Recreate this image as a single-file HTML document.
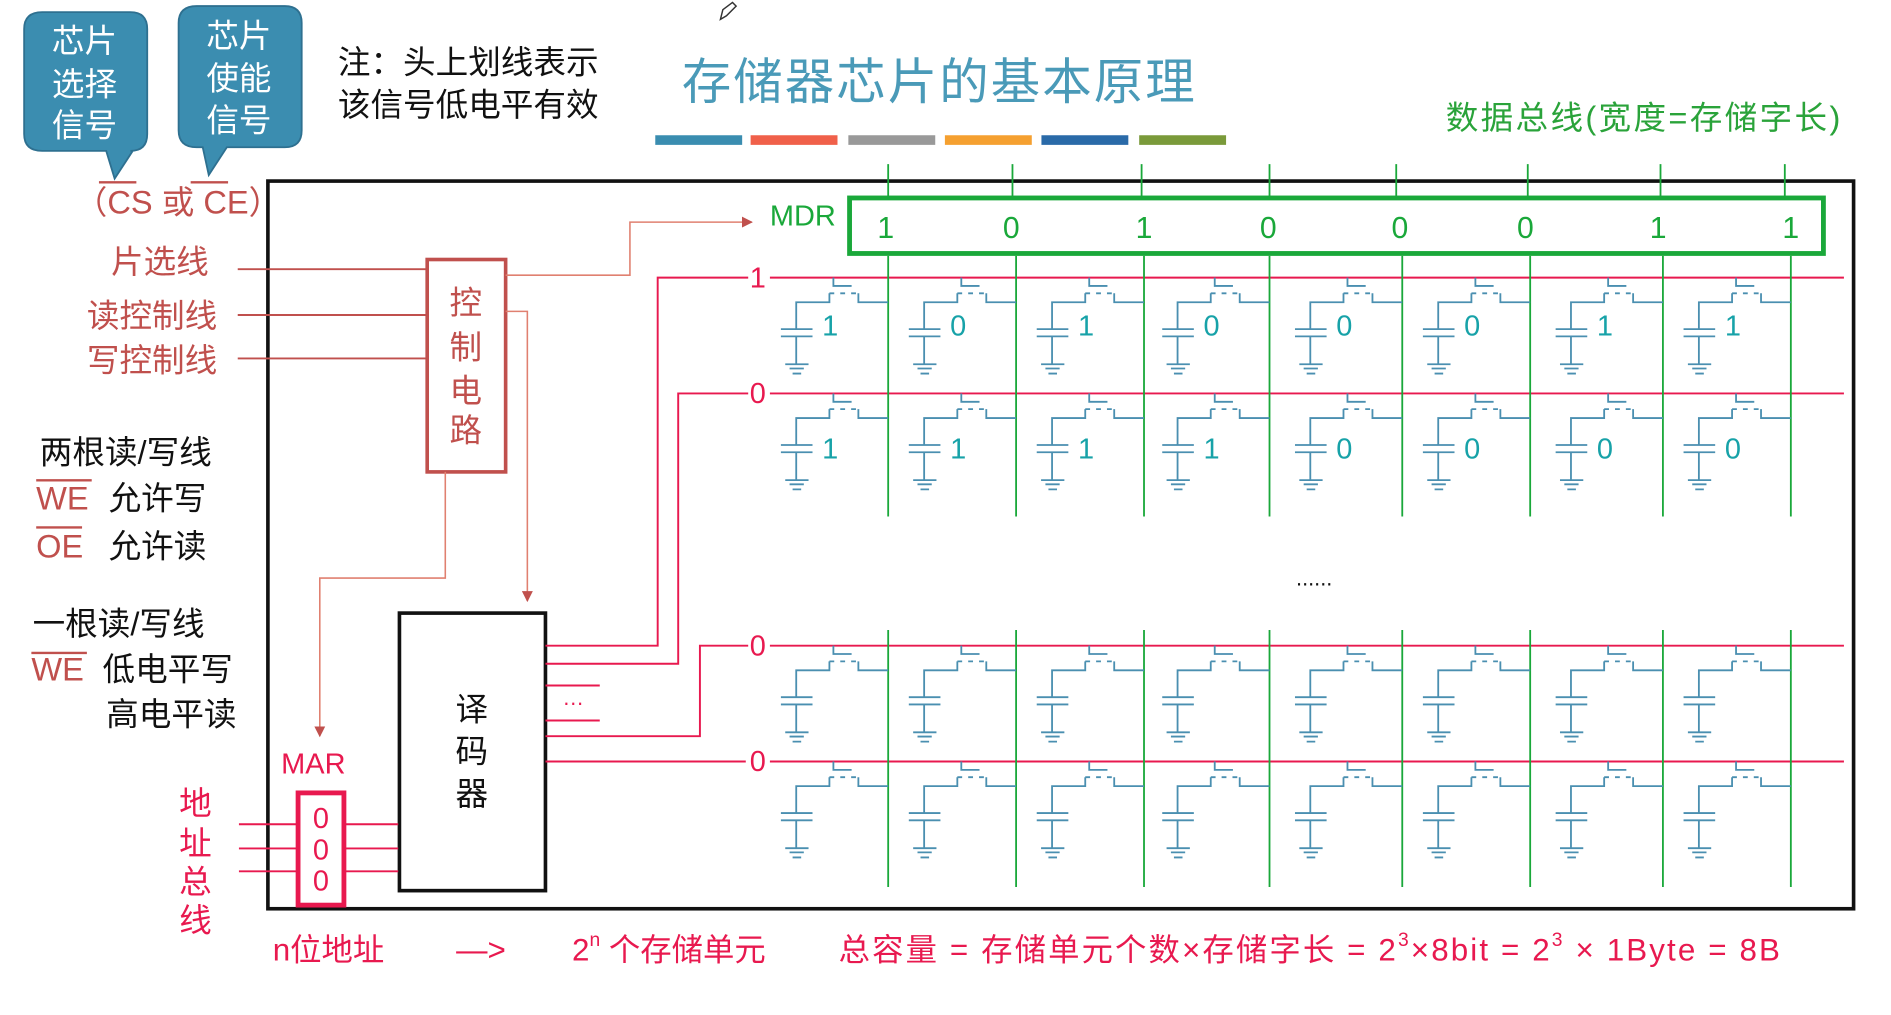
<!DOCTYPE html>
<html><head><meta charset="utf-8"><style>
html,body{margin:0;padding:0;background:#fff;width:1891px;height:1015px;overflow:hidden}
svg{display:block}
text{font-family:"Liberation Sans","Noto Sans CJK SC",sans-serif}
</style></head><body>
<svg width="1891" height="1015" viewBox="0 0 1567 841" xmlns="http://www.w3.org/2000/svg">
<defs>
<g id="c" fill="none" stroke="#4a8fb0" stroke-width="1.5">
<path d="M-45.4,0V6.9H-30.3M-76.2,42.7V20.4H-48.7V13M-24.7,13V20.4H0M-88.9,42.7H-62.7M-88.9,48.7H-62.7M-76.2,48.7V71.8M-85.3,71.8H-66M-81.7,75.3H-69.9M-79.2,79.5H-72.1"/>
<path d="M-48.7,13H-24.7" stroke-dasharray="4 5"/>
</g>
<marker id="ar" viewBox="0 0 10 10" refX="9" refY="5" markerWidth="7" markerHeight="7" orient="auto"><path d="M0,0L10,5L0,10z" fill="#c0504d"/></marker>
</defs>

<path d="M35,10H108Q122,10 122,24V111Q122,125 108,125H110L95,148L88,125H35Q20,125 20,111V24Q20,10 35,10Z" fill="#3b8db0" stroke="#2e7090" stroke-width="1.5"/>
<path d="M163,5H236Q250,5 250,19V108Q250,122 236,122H188L173,145L168,122H163Q148,122 148,108V19Q148,5 163,5Z" fill="#3b8db0" stroke="#2e7090" stroke-width="1.5"/>
<g fill="#fff" font-size="27" text-anchor="middle">
<text x="70" y="43">芯片</text><text x="70" y="79">选择</text><text x="70" y="113">信号</text>
<text x="198" y="39">芯片</text><text x="198" y="74">使能</text><text x="198" y="109">信号</text>
</g>
<text x="62" y="177" font-size="27" fill="#c0504d">（CS 或 CE）</text>
<path d="M82,151H113M158,151H189" stroke="#c0504d" stroke-width="2"/>
<text x="280" y="61" font-size="27" fill="#111">注：头上划线表示</text>
<text x="280" y="96" font-size="27" fill="#111">该信号低电平有效</text>
<text x="565" y="82" font-size="41" fill="#4a9ab8" textLength="425">存储器芯片的基本原理</text>
<path d="M599,8l8,-6l3,3l-8,8l-5,3z" fill="none" stroke="#333" stroke-width="1.2"/>
<g stroke-width="8"><path d="M543,116h72" stroke="#3a8db0"/><path d="M622,116h72" stroke="#f0604a"/><path d="M703,116h72" stroke="#999"/><path d="M783,116h72" stroke="#f5a030"/><path d="M863,116h72" stroke="#2a6aa8"/><path d="M944,116h72" stroke="#7a9a3a"/></g>
<text x="1198" y="107" font-size="27" fill="#2aa33a" textLength="327">数据总线(宽度=存储字长)</text>

<g font-size="27" fill="#c0504d">
<text x="92" y="226">片选线</text><text x="72" y="271">读控制线</text><text x="72" y="308">写控制线</text>
<text x="30" y="422">WE</text><text x="30" y="462">OE</text><text x="26" y="564">WE</text>
</g>
<path d="M30,398H76M30,437H68M26,541H72" stroke="#c0504d" stroke-width="2"/>
<g font-size="27" fill="#111">
<text x="33" y="384">两根读/写线</text><text x="90" y="422">允许写</text><text x="90" y="462">允许读</text>
<text x="27" y="526">一根读/写线</text><text x="85" y="564">低电平写</text><text x="88" y="601">高电平读</text>
</g>

<rect x="222" y="150" width="1314" height="603" fill="none" stroke="#111" stroke-width="3"/>

<path d="M197,223H354M197,261H354M197,297H354" stroke="#c0504d" stroke-width="1.6"/>
<rect x="354" y="215" width="65" height="176" fill="#fff" stroke="#c0504d" stroke-width="3"/>
<g font-size="27" fill="#c0504d" text-anchor="middle"><text x="386" y="260">控</text><text x="386" y="297">制</text><text x="386" y="333">电</text><text x="386" y="366">路</text></g>
<path d="M419,228H522V184H623" fill="none" stroke="#e08070" stroke-width="1.3" marker-end="url(#ar)"/>
<path d="M419,258H437V498" fill="none" stroke="#e08070" stroke-width="1.3" marker-end="url(#ar)"/>
<path d="M369,391V479H265V610" fill="none" stroke="#e08070" stroke-width="1.3" marker-end="url(#ar)"/>

<rect x="331" y="508" width="121" height="230" fill="#fff" stroke="#111" stroke-width="3"/>
<g font-size="27" fill="#111" text-anchor="middle"><text x="391" y="597">译</text><text x="391" y="632">码</text><text x="391" y="667">器</text></g>
<g stroke="#e8194f" stroke-width="1.6" fill="none">
<path d="M452,535H545V230H620M452,550H562V326H620M452,568H497M452,597H497M452,610H580V535H620M452,631H618"/>
<path d="M638,230H1528M638,326H1528M638,535H1528M638,631H1528"/>
<path d="M198,683H330M198,703H330M198,722H330"/>
</g>
<text x="466" y="584" font-size="18" fill="#e8194f">…</text>
<g font-size="24" fill="#e8194f" text-anchor="middle"><text x="628" y="238">1</text><text x="628" y="334">0</text><text x="628" y="543">0</text><text x="628" y="639">0</text></g>

<text x="233" y="641" font-size="24" fill="#e8194f">MAR</text>
<rect x="247" y="657" width="38" height="93" fill="#fff" stroke="#e8194f" stroke-width="4"/>
<g font-size="24" fill="#e8194f" text-anchor="middle"><text x="266" y="686">0</text><text x="266" y="712">0</text><text x="266" y="738">0</text></g>
<g font-size="27" fill="#e8194f" text-anchor="middle"><text x="162" y="675">地</text><text x="162" y="708">址</text><text x="162" y="740">总</text><text x="162" y="772">线</text></g>

<text x="638" y="187" font-size="24" fill="#1aa83a">MDR</text>
<g stroke="#1aa83a" stroke-width="1.5">
<path d="M736,136V164M839,136V164M946,136V164M1052,136V164M1157,136V164M1266,136V164M1376,136V164M1479,136V164"/>
<path d="M736,212V428M842,212V428M948,212V428M1052,212V428M1162,212V428M1268,212V428M1378,212V428M1484,212V428"/>
<path d="M736,522V735M842,522V735M948,522V735M1052,522V735M1162,522V735M1268,522V735M1378,522V735M1484,522V735"/>
</g>
<rect x="704" y="164" width="807" height="46" fill="none" stroke="#1aa83a" stroke-width="4"/>
<g font-size="25" fill="#1aa83a" text-anchor="middle"><text x="734" y="197">1</text><text x="838" y="197">0</text><text x="948" y="197">1</text><text x="1051" y="197">0</text><text x="1160" y="197">0</text><text x="1264" y="197">0</text><text x="1374" y="197">1</text><text x="1484" y="197">1</text></g>

<use href="#c" x="736" y="230"/><use href="#c" x="842" y="230"/><use href="#c" x="948" y="230"/><use href="#c" x="1052" y="230"/><use href="#c" x="1162" y="230"/><use href="#c" x="1268" y="230"/><use href="#c" x="1378" y="230"/><use href="#c" x="1484" y="230"/>
<use href="#c" x="736" y="326"/><use href="#c" x="842" y="326"/><use href="#c" x="948" y="326"/><use href="#c" x="1052" y="326"/><use href="#c" x="1162" y="326"/><use href="#c" x="1268" y="326"/><use href="#c" x="1378" y="326"/><use href="#c" x="1484" y="326"/>
<use href="#c" x="736" y="535"/><use href="#c" x="842" y="535"/><use href="#c" x="948" y="535"/><use href="#c" x="1052" y="535"/><use href="#c" x="1162" y="535"/><use href="#c" x="1268" y="535"/><use href="#c" x="1378" y="535"/><use href="#c" x="1484" y="535"/>
<use href="#c" x="736" y="631"/><use href="#c" x="842" y="631"/><use href="#c" x="948" y="631"/><use href="#c" x="1052" y="631"/><use href="#c" x="1162" y="631"/><use href="#c" x="1268" y="631"/><use href="#c" x="1378" y="631"/><use href="#c" x="1484" y="631"/>
<g font-size="24" fill="#17a2a8" text-anchor="middle">
<text x="688" y="278">1</text><text x="794" y="278">0</text><text x="900" y="278">1</text><text x="1004" y="278">0</text><text x="1114" y="278">0</text><text x="1220" y="278">0</text><text x="1330" y="278">1</text><text x="1436" y="278">1</text>
<text x="688" y="380">1</text><text x="794" y="380">1</text><text x="900" y="380">1</text><text x="1004" y="380">1</text><text x="1114" y="380">0</text><text x="1220" y="380">0</text><text x="1330" y="380">0</text><text x="1436" y="380">0</text>
</g>
<text x="1074" y="485" font-size="18" fill="#111">......</text>

<g font-size="26" fill="#e8194f">
<text x="226" y="796">n位地址</text>
<text x="378" y="796">—&gt;</text>
<text x="474" y="796">2<tspan font-size="16" dy="-12">n</tspan><tspan dy="12"> 个存储单元</tspan></text>
<text x="695" y="796" textLength="780">总容量 = 存储单元个数×存储字长 = 2<tspan font-size="16" dy="-12">3</tspan><tspan dy="12">×8bit = 2</tspan><tspan font-size="16" dy="-12">3</tspan><tspan dy="12"> × 1Byte = 8B</tspan></text>
</g>
</svg>
</body></html>
